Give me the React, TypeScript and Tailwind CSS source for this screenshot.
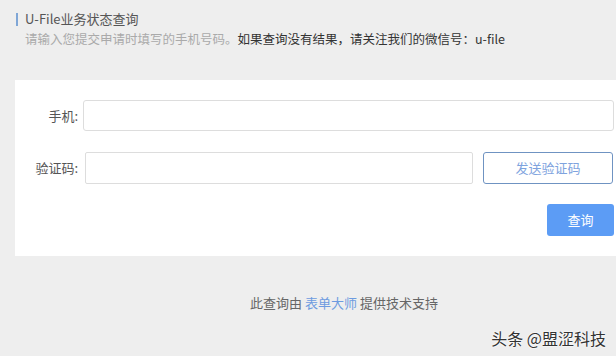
export default function App() {
  return (
    <div
      className="relative w-[616px] h-[356px] overflow-hidden bg-[#eeeeee] text-[13px]"
      style={{ fontFamily: '"Noto Sans CJK SC", "Noto Sans", sans-serif' }}
    >
      {/* Header */}
      <div className="pt-[9px] pl-[16px]">
        <div className="flex items-center h-[20px]">
          <span className="w-[2px] h-[13px] bg-[#7fa6d6]" />
          <span className="ml-[7px] text-[#555555] leading-[20px]">U-File业务状态查询</span>
        </div>
        <div className="ml-[9px] leading-[20px] text-[12.5px]">
          <span className="text-[#aaaaaa]">请输入您提交申请时填写的手机号码。</span>
          <span className="text-[#333333]">如果查询没有结果，请关注我们的微信号：u-file</span>
        </div>
      </div>

      {/* Form card */}
      <div className="mt-[31px] ml-[15px] bg-white pt-[20px] pb-[20px] pr-[2px]">
        <div className="flex items-center h-[31px]">
          <label className="w-[63px] text-right text-[#555555]">手机:</label>
          <input className="ml-[5px] flex-1 h-[31px] border border-[#dddddd] rounded-[3px] outline-none" />
        </div>
        <div className="flex items-center h-[32px] mt-[21px]">
          <label className="w-[63px] text-right text-[#555555]">验证码:</label>
          <input className="ml-[7px] w-[388px] h-[32px] border border-[#dddddd] rounded-[2px] outline-none" />
          <button className="ml-[10px] w-[130px] h-[32px] border border-[#6f93c2] rounded-[3px] text-[#7ea3de] bg-white">
            发送验证码
          </button>
        </div>
        <div className="flex justify-end mt-[20px]">
          <button className="w-[67px] h-[32px] rounded-[3px] bg-[#5c9cf5] text-white">查询</button>
        </div>
      </div>

      {/* Footer */}
      <div className="mt-[37px] pl-[72px] text-center text-[#666666] leading-[20px]">
        此查询由 <span className="text-[#6d9be0]">表单大师</span> 提供技术支持
      </div>

      {/* Watermark */}
      <div
        className="absolute right-[10px] top-[326px] text-[16px] leading-[24px] text-[#333333]"
        style={{ textShadow: '0 0 2px #ffffff, 0 0 2px #ffffff' }}
      >
        头条 @盟涩科技
      </div>
    </div>
  )
}
